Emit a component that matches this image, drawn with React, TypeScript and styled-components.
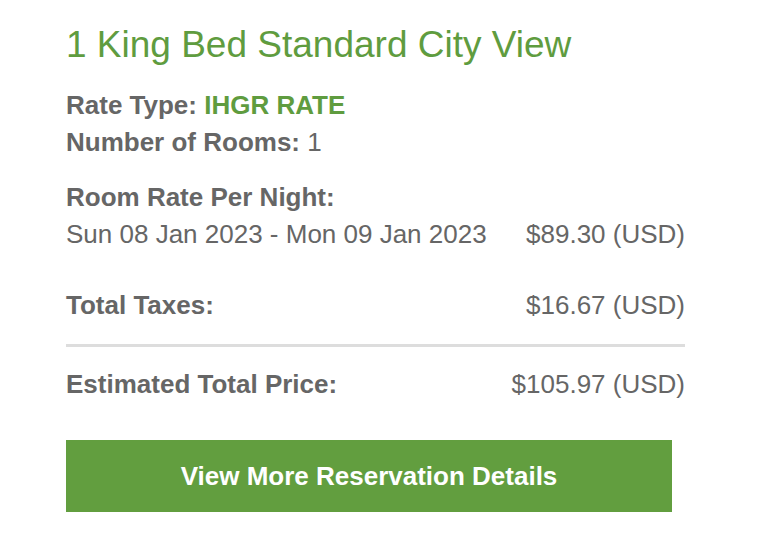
import React from 'react';
import styled, { createGlobalStyle } from 'styled-components';

const GlobalStyle = createGlobalStyle`
  html, body {
    margin: 0;
    padding: 0;
    background: #ffffff;
  }
  body {
    font-family: "Liberation Sans", Arial, Helvetica, sans-serif;
    color: #666666;
  }
`;

const GREEN = '#5f9c3f';

const Card = styled.div`
  width: 619px;
  padding: 23px 0 0 66px;
  display: flex;
  flex-direction: column;
`;

const Title = styled.h1`
  margin: 0;
  font-size: 37px;
  line-height: 44px;
  font-weight: 400;
  color: ${GREEN};
`;

const Group = styled.div<{ $gap?: number }>`
  display: flex;
  flex-direction: column;
  margin-top: ${(p) => p.$gap ?? 0}px;
`;

const Line = styled.div`
  font-size: 26px;
  line-height: 37px;
  color: #666666;
`;

const Label = styled.span`
  font-weight: 700;
`;

const Highlight = styled.span`
  font-weight: 700;
  color: ${GREEN};
`;

const Row = styled.div`
  display: flex;
  justify-content: space-between;
  align-items: baseline;
  font-size: 26px;
  line-height: 37px;
  color: #666666;
`;

const Amount = styled.span`
  white-space: nowrap;
`;

const Divider = styled.hr`
  margin: 20px 0 0;
  border: none;
  height: 3px;
  background: #dddddd;
`;

const DetailsButton = styled.button`
  margin-top: 37px;
  width: 606px;
  height: 72px;
  border: none;
  border-radius: 0;
  background: #629e3f;
  color: #ffffff;
  font-family: inherit;
  font-size: 26px;
  font-weight: 700;
  cursor: pointer;
`;

const App: React.FC = () => {
  return (
    <>
      <GlobalStyle />
      <Card>
        <Title>1 King Bed Standard City View</Title>

        <Group $gap={20}>
          <Line>
            <Label>Rate Type:</Label> <Highlight>IHGR RATE</Highlight>
          </Line>
          <Line>
            <Label>Number of Rooms:</Label> 1
          </Line>
        </Group>

        <Group $gap={18}>
          <Line>
            <Label>Room Rate Per Night:</Label>
          </Line>
          <Row>
            <span>Sun 08 Jan 2023 - Mon 09 Jan 2023</span>
            <Amount>$89.30 (USD)</Amount>
          </Row>
        </Group>

        <Group $gap={34}>
          <Row>
            <Label>Total Taxes:</Label>
            <Amount>$16.67 (USD)</Amount>
          </Row>
        </Group>

        <Divider />

        <Group $gap={19}>
          <Row>
            <Label>Estimated Total Price:</Label>
            <Amount>$105.97 (USD)</Amount>
          </Row>
        </Group>

        <DetailsButton type="button">View More Reservation Details</DetailsButton>
      </Card>
    </>
  );
};

export default App;
